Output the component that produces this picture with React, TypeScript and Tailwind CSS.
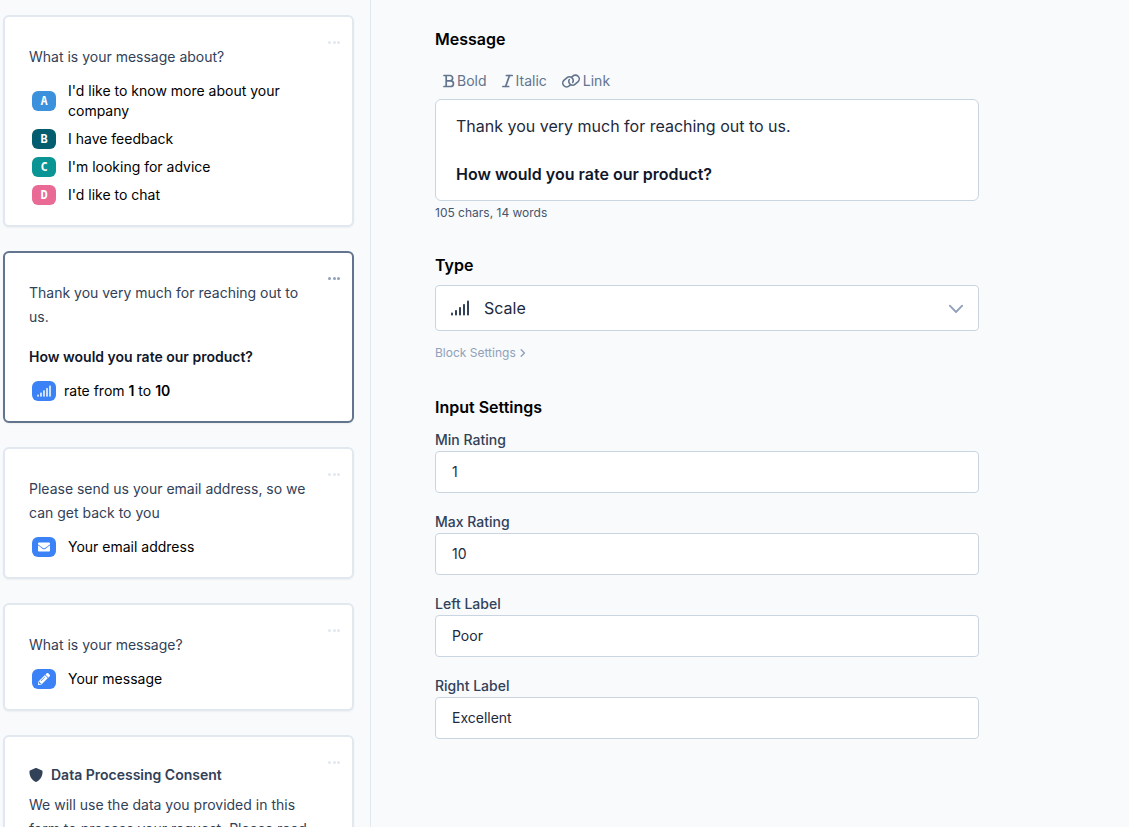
import React, { useState } from 'react';
import { FaEnvelope, FaPencilAlt } from 'react-icons/fa';
import { FaShield } from 'react-icons/fa6';
import clsx from 'clsx';

const SignalIcon = ({ className }: { className?: string }) => (
    <svg viewBox="0 0 20 16" fill="currentColor" className={className} aria-hidden="true">
        <rect x="1" y="12.5" width="2" height="3" rx="0.8" />
        <rect x="5" y="10" width="2" height="5.5" rx="0.8" />
        <rect x="9" y="7" width="2" height="8.5" rx="0.8" />
        <rect x="13" y="4" width="2" height="11.5" rx="0.8" />
        <rect x="17" y="0.5" width="2" height="15" rx="0.8" />
    </svg>
);

const BoldIcon = () => (
    <svg viewBox="0 0 12 14" fill="none" stroke="currentColor" strokeWidth="1.7" strokeLinecap="round" strokeLinejoin="round" className="h-3.5 w-3" aria-hidden="true">
        <path d="M1 1.5h6a2.6 2.6 0 0 1 0 5.3H3.2M1 12.5h6.6a2.8 2.8 0 0 0 0-5.7M3.2 1.5v11" />
    </svg>
);

const ItalicIcon = () => (
    <svg viewBox="0 0 12 14" fill="none" stroke="currentColor" strokeWidth="1.7" strokeLinecap="round" className="h-3.5 w-3" aria-hidden="true">
        <path d="M4.4 1.5h5.8M0.9 12.5h5.8M7.5 1.5L3.6 12.5" />
    </svg>
);

const LinkIcon = () => (
    <svg viewBox="0 0 18 14" fill="none" stroke="currentColor" strokeWidth="1.6" strokeLinecap="round" className="h-3.5 w-[18px]" aria-hidden="true">
        <path d="M8.3 10.9l-1 .9a3.8 3.8 0 0 1-5.4-5.4l2.9-2.5a3.8 3.8 0 0 1 5.9 4.6" />
        <path d="M9.7 3.1l1-.9a3.8 3.8 0 0 1 5.4 5.4l-2.9 2.5a3.8 3.8 0 0 1-5.9-4.6" />
    </svg>
);

interface CardProps {
    active?: boolean;
    children: React.ReactNode;
}

function Card({ active, children }: CardProps) {
    return (
        <article
            className={clsx(
                'relative rounded-md border-2 bg-white pt-7 pr-10 pb-4 pl-6 shadow-xs',
                active ? 'border-slate-500' : 'border-slate-200'
            )}
        >
            <button
                type="button"
                aria-label="Block options"
                className={clsx('absolute top-5 right-3 flex h-2.5 w-3 items-center justify-between', active ? 'text-slate-400' : 'text-slate-200')}
            >
                <span className="h-[3px] w-[3px] rounded-full bg-current" />
                <span className="h-[3px] w-[3px] rounded-full bg-current" />
                <span className="h-[3px] w-[3px] rounded-full bg-current" />
            </button>
            {children}
        </article>
    );
}

interface RowProps {
    badge: React.ReactNode;
    color: string;
    tight?: boolean;
    children: React.ReactNode;
}

function Row({ badge, color, tight, children }: RowProps) {
    return (
        <div className={clsx('flex items-center py-1 pl-[3px] text-sm text-black', tight ? 'gap-2' : 'gap-3')}>
            <span className={clsx('flex h-5 w-6 shrink-0 items-center justify-center rounded-md font-["DejaVu_Sans_Mono",monospace] text-xs font-bold text-white', color)}>
                {badge}
            </span>
            <span>{children}</span>
        </div>
    );
}

const choices = [
    { key: 'A', label: "I'd like to know more about your company", color: 'bg-[#3c91dd]' },
    { key: 'B', label: 'I have feedback', color: 'bg-[#045d6e]' },
    { key: 'C', label: "I'm looking for advice", color: 'bg-[#0a9494]' },
    { key: 'D', label: "I'd like to chat", color: 'bg-[#e96a95]' },
];

const fields = [
    { id: 'min-rating', label: 'Min Rating', value: '1' },
    { id: 'max-rating', label: 'Max Rating', value: '10' },
    { id: 'left-label', label: 'Left Label', value: 'Poor' },
    { id: 'right-label', label: 'Right Label', value: 'Excellent' },
];

function BlockList() {
    return (
        <aside className="flex w-[371px] shrink-0 flex-col gap-6 overflow-hidden border-r border-slate-200 pt-[15px] pr-4 pl-[3px] *:shrink-0">
            <Card>
                <p className="mb-2 text-sm leading-6 text-slate-700">What is your message about?</p>
                {choices.map((choice) => (
                    <Row key={choice.key} badge={choice.key} color={choice.color}>
                        {choice.label}
                    </Row>
                ))}
            </Card>

            <Card active>
                <p className="mb-4 text-sm leading-6 text-slate-700">Thank you very much for reaching out to us.</p>
                <p className="mb-2 text-sm leading-6 font-semibold text-slate-900">How would you rate our product?</p>
                <Row badge={<SignalIcon className="h-3 w-4" />} color="bg-[#3b82f6]" tight>
                    rate from <b className="font-semibold">1</b> to <b className="font-semibold">10</b>
                </Row>
            </Card>

            <Card>
                <p className="mb-2 text-sm leading-6 text-slate-700">Please send us your email address, so we can get back to you</p>
                <Row badge={<FaEnvelope size={12} />} color="bg-[#3b82f6]">
                    Your email address
                </Row>
            </Card>

            <Card>
                <p className="mb-2 text-sm leading-6 text-slate-700">What is your message?</p>
                <Row badge={<FaPencilAlt size={12} />} color="bg-[#3b82f6]">
                    Your message
                </Row>
            </Card>

            <Card>
                <h3 className="mb-2 flex items-center gap-2 text-sm font-semibold text-slate-700">
                    <FaShield size={14} />
                    Data Processing Consent
                </h3>
                <p className="text-sm leading-6 text-slate-700">
                    We will use the data you provided in this form to process your request. Please read
                </p>
            </Card>
        </aside>
    );
}

function BlockEditor() {
    const [values, setValues] = useState<Record<string, string>>(
        Object.fromEntries(fields.map((field) => [field.id, field.value]))
    );

    return (
        <main className="min-w-0 flex-1 px-16 pt-[27px]">
            <div className="max-w-[544px]">
                {/* Message */}
                <h2 id="message-label" className="font-semibold text-black">Message</h2>
                <div className="mt-5 mb-2 flex gap-[15px] pl-2 text-sm text-slate-500">
                    <button type="button" className="flex items-center gap-0.5"><BoldIcon />Bold</button>
                    <button type="button" className="flex items-center gap-0.5"><ItalicIcon />Italic</button>
                    <button type="button" className="flex items-center gap-[3px]"><LinkIcon />Link</button>
                </div>
                <div
                    role="textbox"
                    aria-labelledby="message-label"
                    aria-multiline="true"
                    contentEditable
                    suppressContentEditableWarning
                    className="rounded-md border border-slate-300 bg-white px-5 py-3.5 text-slate-800"
                >
                    <p className="mb-6">Thank you very much for reaching out to us.</p>
                    <p className="font-semibold text-slate-900">How would you rate our product?</p>
                </div>
                <p className="mt-1 text-xs text-slate-600">105 chars, 14 words</p>

                {/* Type */}
                <h2 className="mt-8 font-semibold text-black">
                    <label htmlFor="type">Type</label>
                </h2>
                <div className="relative mt-2">
                    <select
                        id="type"
                        className="h-[46px] w-full appearance-none rounded border border-slate-300 bg-white pr-10 pl-12 text-slate-800"
                    >
                        <option>Scale</option>
                    </select>
                    <SignalIcon className="pointer-events-none absolute top-[15px] left-[15px] h-4 w-5 text-slate-700" />
                    <svg viewBox="0 0 16 10" fill="none" stroke="currentColor" strokeWidth="1.8" strokeLinecap="round" strokeLinejoin="round" className="pointer-events-none absolute top-[19px] right-[15px] h-2.5 w-4 text-slate-400" aria-hidden="true">
                        <path d="M1.8 1.6L8 8l6.2-6.4" />
                    </svg>
                </div>
                <button type="button" className="mt-3.5 flex items-center gap-1 text-xs text-slate-400">
                    Block Settings
                    <svg viewBox="0 0 6 10" fill="none" stroke="currentColor" strokeWidth="1.4" strokeLinecap="round" strokeLinejoin="round" className="h-2.5 w-1.5" aria-hidden="true">
                        <path d="M1.2 1.8L4.4 5L1.2 8.2" />
                    </svg>
                </button>

                {/* Input Settings */}
                <h2 className="mt-[34px] font-semibold text-black">Input Settings</h2>
                <div className="mt-[11px] flex flex-col gap-[19px]">
                    {fields.map((field) => (
                        <div key={field.id} className="flex flex-col gap-px">
                            <label htmlFor={field.id} className="text-sm font-medium text-slate-700">{field.label}</label>
                            <input
                                id={field.id}
                                value={values[field.id]}
                                onChange={(e) => setValues({ ...values, [field.id]: e.target.value })}
                                className="h-[42px] w-full rounded border border-slate-300 bg-white px-4 pb-0.5 text-sm text-slate-800"
                            />
                        </div>
                    ))}
                </div>
            </div>
        </main>
    );
}

export default function App() {
    return (
        <div className="flex h-screen overflow-hidden bg-slate-50 font-[Inter,sans-serif]">
            <BlockList />
            <BlockEditor />
        </div>
    );
}
